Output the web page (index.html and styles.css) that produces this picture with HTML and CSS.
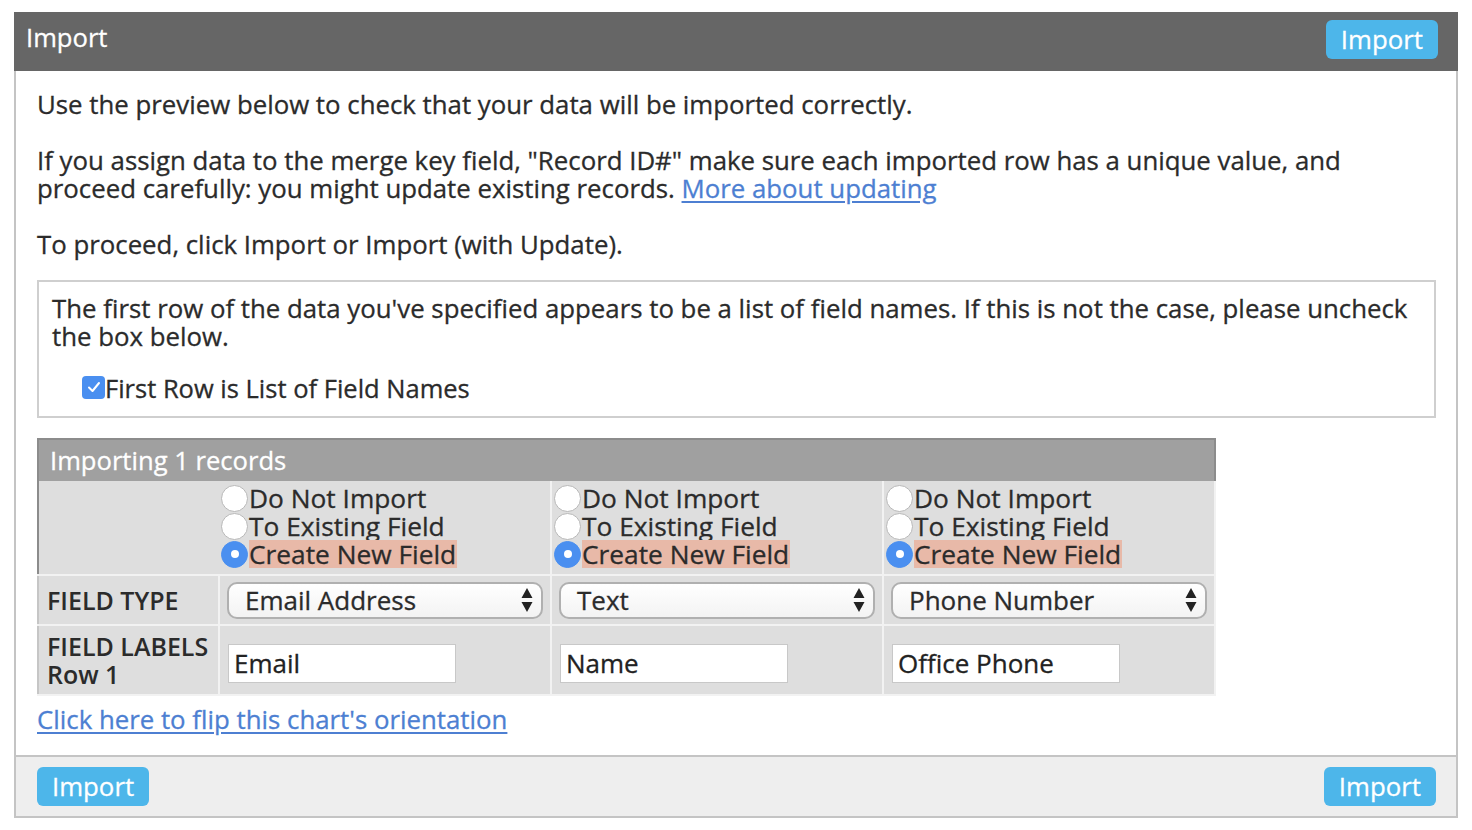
FILE: index.html
```html
<!DOCTYPE html>
<html lang="en">
<head>
	<meta charset="UTF-8">
	<title>Import</title>
	<link rel="stylesheet" href="styles.css">
</head>
<body>
	<div class="panel">
		<div class="panel-head">
			<span class="panel-title">Import</span>
			<span class="btn">Import</span>
		</div>
		<div class="panel-body">
			<p>Use the preview below to check that your data will be imported correctly.</p>
			<p>If you assign data to the merge key field, "Record ID#" make sure each imported row has a unique value, and proceed carefully: you might update existing records. <a href="#">More about updating</a></p>
			<p>To proceed, click Import or Import (with Update).</p>

			<div class="notice">
				<p>The first row of the data you've specified appears to be a list of field names. If this is not the case, please uncheck the box below.</p>
				<label class="check-line"><span class="checkbox"><svg width="14" height="12" viewBox="0 0 14 12"><path d="M2 6.5 L5.5 10 L12 2" fill="none" stroke="#fff" stroke-width="2" stroke-linecap="round" stroke-linejoin="round"/></svg></span>First Row is List of Field Names</label>
			</div>

			<table class="preview">
				<colgroup>
					<col class="c-label">
					<col class="c-field">
					<col class="c-field">
					<col class="c-field">
				</colgroup>
				<tr><th colspan="4">Importing 1 records</th></tr>
				<tr class="opts">
					<td class="blank"></td>
					<td>
						<div class="opt"><span class="radio"></span>Do Not Import</div>
						<div class="opt"><span class="radio"></span>To Existing Field</div>
						<div class="opt"><span class="radio on"></span><span class="hl">Create New Field</span></div>
					</td>
					<td>
						<div class="opt"><span class="radio"></span>Do Not Import</div>
						<div class="opt"><span class="radio"></span>To Existing Field</div>
						<div class="opt"><span class="radio on"></span><span class="hl">Create New Field</span></div>
					</td>
					<td>
						<div class="opt"><span class="radio"></span>Do Not Import</div>
						<div class="opt"><span class="radio"></span>To Existing Field</div>
						<div class="opt"><span class="radio on"></span><span class="hl">Create New Field</span></div>
					</td>
				</tr>
				<tr class="types">
					<td class="label">FIELD TYPE</td>
					<td><div class="select"><span>Email Address</span><svg class="arrows" width="12" height="26" viewBox="0 0 12 26"><path d="M6 1 L11.5 11 H0.5 Z M0.5 15 H11.5 L6 25 Z" fill="#222"/></svg></div></td>
					<td><div class="select"><span>Text</span><svg class="arrows" width="12" height="26" viewBox="0 0 12 26"><path d="M6 1 L11.5 11 H0.5 Z M0.5 15 H11.5 L6 25 Z" fill="#222"/></svg></div></td>
					<td><div class="select"><span>Phone Number</span><svg class="arrows" width="12" height="26" viewBox="0 0 12 26"><path d="M6 1 L11.5 11 H0.5 Z M0.5 15 H11.5 L6 25 Z" fill="#222"/></svg></div></td>
				</tr>
				<tr class="labels">
					<td class="label">FIELD LABELS<br>Row 1</td>
					<td><input class="field" type="text" value="Email"></td>
					<td><input class="field" type="text" value="Name"></td>
					<td><input class="field" type="text" value="Office Phone"></td>
				</tr>
			</table>
			<a class="flip" href="#">Click here to flip this chart's orientation</a>
		</div>
		<div class="panel-foot">
			<span class="btn">Import</span>
			<span class="btn">Import</span>
		</div>
	</div>
</body>
</html>
```

FILE: styles.css
```css
body {
	margin: 12px 14px;
	font-family: "Open Sans", "Liberation Sans", sans-serif;
	color: #2b2b2b;
	background: #fff;
	-webkit-text-stroke: 0.3px currentColor;
}

.panel {
	width: 1444px;
	box-sizing: border-box;
	border-left: 2px solid #c4c4c4;
	border-right: 2px solid #c4c4c4;
	border-bottom: 2px solid #c4c4c4;
}

.panel-head {
	display: flex;
	justify-content: space-between;
	align-items: flex-start;
	height: 59px;
	box-sizing: border-box;
	margin: 0 -2px;
	padding: 8px 20px 0 12px;
	background-color: #666;
}

.panel-title {
	color: #fff;
	font-size: 25.6px;
	line-height: 38px;
	margin-top: -1px;
}

.btn {
	display: inline-block;
	background-color: #4db6ea;
	color: #fff;
	font-size: 25.8px;
	line-height: 39px;
	padding: 0 15px;
	border-radius: 6px;
}

.panel-body {
	padding: 19px 20px 22px 21px;
	font-size: 25.8px;
	line-height: 28px;
}

.panel-body p {
	margin: 0 0 28px;
}

.panel-body a {
	color: #4d7fd2;
	text-decoration: underline;
	text-underline-offset: 3px;
}

.notice {
	border: 2px solid #cfcfcf;
	padding: 12px 13px 14px;
	margin-top: -6px;
}

.notice p {
	margin: 0 0 24px;
}

.check-line {
	display: flex;
	align-items: center;
	padding-left: 30px;
	font-size: 25.5px;
}

.checkbox {
	display: inline-flex;
	align-items: center;
	justify-content: center;
	width: 23px;
	height: 23px;
	border-radius: 4px;
	background-color: #4a8ff0;
	margin-top: -2px;
	-webkit-text-stroke: 0;
}

.preview {
	margin-top: 20px;
	width: 1178px;
	table-layout: fixed;
	border-collapse: collapse;
	border: 2px solid #8c8c8c;
	font-size: 26.3px;
	line-height: 28px;
}

.c-label {
	width: 181px;
}

.c-field {
	width: 332px;
}

.preview th {
	background-color: #a0a0a0;
	color: #fff;
	font-weight: normal;
	text-align: left;
	height: 41px;
	padding: 0 0 0 11px;
	font-size: 25.6px;
}

.preview td {
	background-color: #dedede;
	border: 2px solid #c6c6c6;
	border-right-color: #f2f2f2;
	border-bottom-color: #f2f2f2;
	vertical-align: middle;
	padding: 0 7px;
}

.preview td.blank {
	border-right: none;
}

.opts td {
	padding: 3px 2px 6px;
	border-top: none;
	border-left: none;
}

.opt {
	display: flex;
	align-items: center;
	height: 28px;
}

.radio {
	width: 25px;
	height: 25px;
	border-radius: 50%;
	background: #fff;
	border: 1px solid #b8b8b8;
	margin: 0 1px 0 0;
	display: inline-flex;
	align-items: center;
	justify-content: center;
	flex: none;
}

.radio.on {
	background-color: #4a8ff0;
	border-color: #4a8ff0;
}

.radio.on::after {
	content: "";
	width: 8px;
	height: 8px;
	border-radius: 50%;
	background: #fff;
}

.hl {
	background-color: #e8b9a8;
	padding-right: 1px;
}

.types td {
	height: 48px;
}

.label {
	font-weight: 600;
	color: #2b2b2b;
	padding-left: 8px !important;
	padding-right: 0 !important;
	font-size: 25px;
	white-space: nowrap;
	-webkit-text-stroke: 0;
}

.select {
	display: flex;
	justify-content: space-between;
	align-items: center;
	height: 37px;
	box-sizing: border-box;
	border: 2px solid #b0b0b0;
	border-radius: 10px;
	background: linear-gradient(#fff, #f3f3f3);
	padding: 0 8px 0 16px;
	font-size: 26px;
}

.labels td {
	height: 68px;
}

.field {
	width: 228px;
	height: 39px;
	box-sizing: border-box;
	border: 1px solid #c8c8c8;
	font-family: "Open Sans", "Liberation Sans", sans-serif;
	font-size: 26px;
	color: #222;
	padding: 0 5px;
	margin: 6px 0 0 1px;
	-webkit-text-stroke: 0.3px #222;
}

.flip {
	display: inline-block;
	margin-top: 9px;
	font-size: 25.8px;
}

.panel-foot {
	display: flex;
	justify-content: space-between;
	align-items: center;
	height: 61px;
	box-sizing: border-box;
	padding: 0 20px 0 21px;
	background-color: #eee;
	border-top: 2px solid #c4c4c4;
}
```
